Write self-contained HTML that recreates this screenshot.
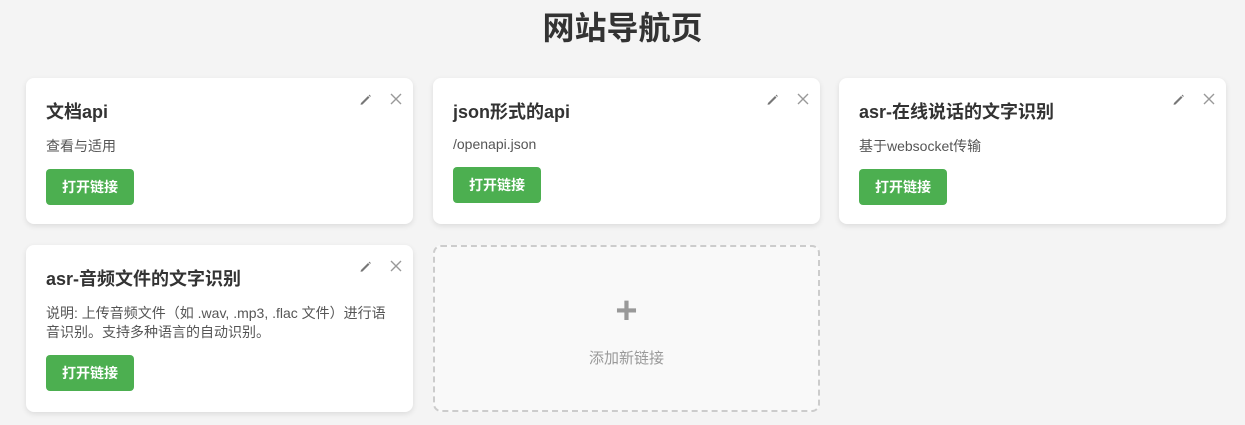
<!DOCTYPE html>
<html><head><meta charset="utf-8"><style>
body{margin:0;background:#f4f4f4;font-family:"Liberation Sans","Noto Sans CJK SC",sans-serif;width:1245px;height:425px;overflow:hidden;position:relative}
h1{position:absolute;left:0;right:0;top:6px;margin:0;text-align:center;font-size:32px;line-height:44px;color:#333;font-weight:bold}
.card{position:absolute;width:387px;background:#fff;border-radius:8px;box-shadow:0 2px 6px rgba(0,0,0,.1);box-sizing:border-box;padding:20px 20px 20px 20px}
.card h3{margin:0;font-size:18px;line-height:28px;color:#333;font-weight:bold}
.card p{margin:11px 0 13px;font-size:14px;line-height:19px;color:#555}
.btn{display:inline-block;background:#4caf50;color:#fff;font-size:14px;width:88px;height:36px;line-height:36px;text-align:center;border-radius:4px;font-weight:bold}
.ic{position:absolute;top:14px;right:10px;display:flex;gap:17px;align-items:center}
.ic svg{display:block}
.add{position:absolute;left:433px;top:245px;width:387px;height:167px;box-sizing:border-box;border:2px dashed #ccc;border-radius:8px;background:#f9f9f9;text-align:center;color:#999}
</style></head><body>
<h1>网站导航页</h1>

<div class="card" style="left:26px;top:78px;height:146px">
<div class="ic"><svg width="14" height="14" viewBox="0 0 14 14"><path d="M3 11 L10 4 L11.5 5.5 L4.5 12.5 L2.5 12.8 Z" fill="#777"/><path d="M10.6 3.4 L11.4 2.6 L12.9 4.1 L12.1 4.9Z" fill="#777"/></svg><svg width="14" height="14" viewBox="0 0 14 14"><path d="M2 2 L12 12 M12 2 L2 12" stroke="#999" stroke-width="1.4"/></svg></div>
<h3>文档api</h3><p>查看与适用</p><span class="btn">打开链接</span></div>

<div class="card" style="left:433px;top:78px;height:146px">
<div class="ic"><svg width="14" height="14" viewBox="0 0 14 14"><path d="M3 11 L10 4 L11.5 5.5 L4.5 12.5 L2.5 12.8 Z" fill="#777"/><path d="M10.6 3.4 L11.4 2.6 L12.9 4.1 L12.1 4.9Z" fill="#777"/></svg><svg width="14" height="14" viewBox="0 0 14 14"><path d="M2 2 L12 12 M12 2 L2 12" stroke="#999" stroke-width="1.4"/></svg></div>
<h3>json形式的api</h3><p style="margin-top:9px">/openapi.json</p><span class="btn">打开链接</span></div>

<div class="card" style="left:839px;top:78px;height:146px">
<div class="ic"><svg width="14" height="14" viewBox="0 0 14 14"><path d="M3 11 L10 4 L11.5 5.5 L4.5 12.5 L2.5 12.8 Z" fill="#777"/><path d="M10.6 3.4 L11.4 2.6 L12.9 4.1 L12.1 4.9Z" fill="#777"/></svg><svg width="14" height="14" viewBox="0 0 14 14"><path d="M2 2 L12 12 M12 2 L2 12" stroke="#999" stroke-width="1.4"/></svg></div>
<h3>asr-在线说话的文字识别</h3><p>基于websocket传输</p><span class="btn">打开链接</span></div>

<div class="card" style="left:26px;top:245px;height:167px">
<div class="ic"><svg width="14" height="14" viewBox="0 0 14 14"><path d="M3 11 L10 4 L11.5 5.5 L4.5 12.5 L2.5 12.8 Z" fill="#777"/><path d="M10.6 3.4 L11.4 2.6 L12.9 4.1 L12.1 4.9Z" fill="#777"/></svg><svg width="14" height="14" viewBox="0 0 14 14"><path d="M2 2 L12 12 M12 2 L2 12" stroke="#999" stroke-width="1.4"/></svg></div>
<h3>asr-音频文件的文字识别</h3><p>说明: 上传音频文件（如 .wav, .mp3, .flac 文件）进行语音识别。支持多种语言的自动识别。</p><span class="btn">打开链接</span></div>

<div class="add"><div style="font-size:38px;line-height:36px;margin-top:46px;color:#999;font-weight:bold">+</div><div style="font-size:15px;margin-top:18px">添加新链接</div></div>
</body></html>
